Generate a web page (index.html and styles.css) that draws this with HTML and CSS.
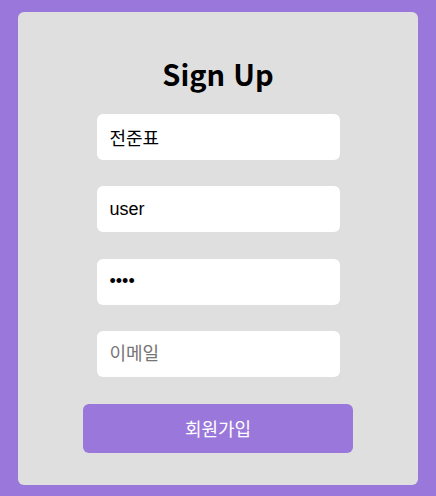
FILE: index.html
```html
<!DOCTYPE html>
<html lang="ko">
<head>
  <meta charset="UTF-8">
  <title>Sign Up</title>
  <link rel="stylesheet" href="styles.css">
</head>
<body>
  <div class="card">
    <h1>Sign Up</h1>
    <form class="signup-form">
      <input type="text" class="field" value="전준표">
      <input type="text" class="field" value="user">
      <input type="password" class="field" value="1234">
      <input type="email" class="field" placeholder="이메일">
      <button type="button" class="submit">회원가입</button>
    </form>
  </div>
</body>
</html>
```

FILE: styles.css
```css
* { box-sizing: border-box; margin: 0; padding: 0; }

body {
  background: #9a78db;
  padding: 12px 18px 11px;
  font-family: "Liberation Sans", "Noto Sans CJK KR", sans-serif;
  height: 100vh;
}

.card {
  background: #dfdfdf;
  border-radius: 6px;
  width: 400px;
  height: 473px;
  padding-top: 41px;
}

.card h1 {
  font-family: "Noto Sans CJK KR", sans-serif;
  font-size: 29px;
  font-weight: 700;
  text-align: center;
  line-height: 40px;
  color: #000;
  margin-bottom: 21px;
}

.signup-form {
  display: flex;
  flex-direction: column;
  align-items: center;
  gap: 26.4px;
}

.field {
  width: 243px;
  height: 46px;
  border: none;
  border-radius: 6px;
  background: #fff;
  padding: 0 13px;
  font-family: inherit;
  font-size: 18px;
  color: #000;
  outline: none;
}

.field::placeholder {
  color: #757575;
}

.submit {
  width: 270px;
  height: 49px;
  border: none;
  border-radius: 6px;
  background: #9a78db;
  color: #fff;
  font-family: "Noto Sans CJK KR", sans-serif;
  font-size: 18px;
  cursor: pointer;
}
```
